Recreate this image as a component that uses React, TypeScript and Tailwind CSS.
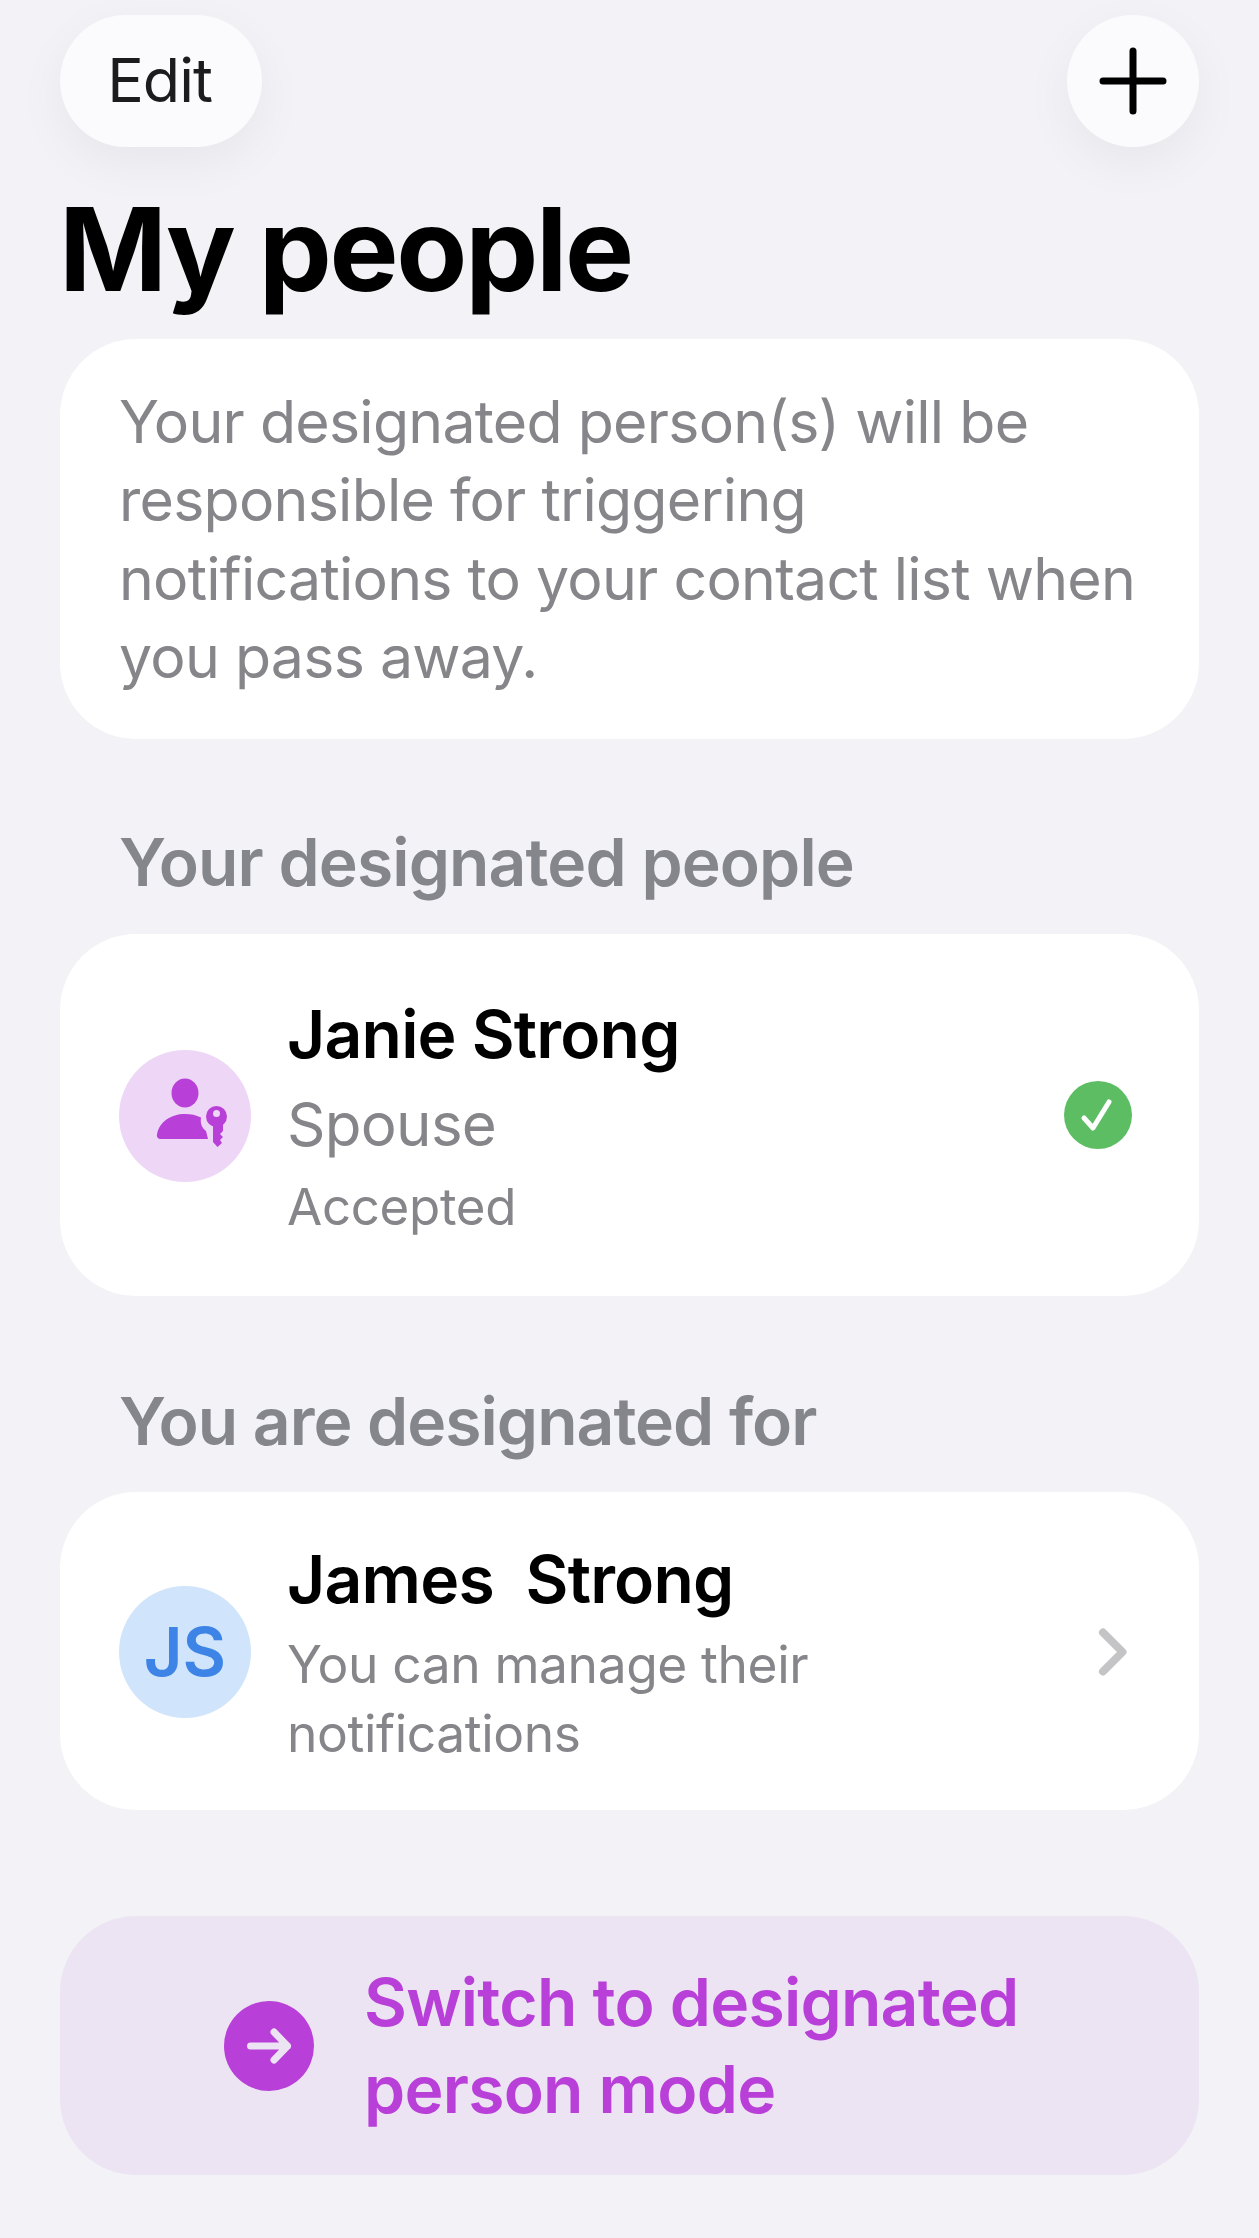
import React from "react";

const font = { fontFamily: "Inter, 'Liberation Sans', sans-serif" };

const PersonKeyIcon = () => (
  <svg width="132" height="132" viewBox="0 0 132 132" fill="#b93fd9">
    <ellipse cx="66" cy="43" rx="13.500" ry="14.500" />
    <path d="M42 89c-3 0-4.500-2-4-4.500C40 72 52 64 66 64c6 0 11 1 16 3.500-1 6 1 10.500 5 13.500l2 8z" />
    <circle cx="97.500" cy="66.500" r="10.500" />
    <path d="M94 72v20l4.500 5 4.500-4-2-3 3-3-3-3 3-3v-9z" />
    <circle cx="97.500" cy="63.500" r="3.500" fill="#eed6f6" />
  </svg>
);

export default function App() {
  return (
    <div
      className="w-[1259px] h-[2238px] bg-[#f2f2f7] px-[60px] pt-[15px] overflow-hidden"
      style={font}
    >
      <div className="flex justify-between">
        <button className="w-[202px] h-[132px] rounded-[66px] bg-[#fbfbfe] text-[#1c1c1e] text-[61px] tracking-[-1px] pr-[3px] shadow-[0_16px_50px_rgba(0,0,0,0.05)]">
          Edit
        </button>
        <button className="w-[132px] h-[132px] rounded-full bg-[#fbfbfe] flex items-center justify-center shadow-[0_16px_50px_rgba(0,0,0,0.05)]">
          <svg width="68" height="68" viewBox="0 0 68 68" stroke="#000" strokeWidth="7" strokeLinecap="round">
            <path d="M34 4v60M4 34h60" />
          </svg>
        </button>
      </div>

      <h1 className="mt-[32px] -ml-[1px] text-[116px] leading-[140px] font-bold text-black tracking-[-2.300px]">My people</h1>

      <div className="mt-[20px] bg-white rounded-[76px] h-[400px] pl-[59px] pr-[52px] pt-[44px]">
        <p className="text-[59px] leading-[78.300px] text-[#85858a] tracking-[-0.740px]">
          Your designated person(s) will be responsible for triggering notifications to your contact list when you pass away.
        </p>
      </div>

      <h2 className="mt-[87px] ml-[59px] text-[66px] leading-[72px] font-semibold text-[#85858c] tracking-[-0.900px]">
        Your designated people
      </h2>

      <div className="mt-[36px] bg-white rounded-[76px] h-[362px] pl-[59px] pr-[67px] flex items-center">
        <div className="mt-[2px] w-[132px] h-[132px] rounded-full bg-[#eed6f6] flex items-center justify-center">
          <PersonKeyIcon />
        </div>
        <div className="ml-[36px] flex-1 pt-[2px]">
          <div className="text-[66px] leading-[78px] font-semibold text-black tracking-[-0.800px]">Janie Strong</div>
          <div className="mt-[15px] text-[60px] leading-[72px] text-[#85858a] tracking-[-0.700px]">Spouse</div>
          <div className="mt-[16px] text-[51px] leading-[62px] text-[#85858a] tracking-[-0.300px]">Accepted</div>
        </div>
        <div className="w-[68px] h-[68px] rounded-full bg-[#5dbd63] flex items-center justify-center">
          <svg width="36" height="36" viewBox="0 0 36 36" fill="none" stroke="#fff" strokeWidth="5" strokeLinecap="round" strokeLinejoin="round">
            <path d="M4 21l9 10L29 5" />
          </svg>
        </div>
      </div>

      <h2 className="mt-[89px] ml-[59px] text-[66px] leading-[72px] font-semibold text-[#85858c] tracking-[-1px]">
        You are designated for
      </h2>

      <div className="mt-[35px] bg-white rounded-[76px] h-[318px] pl-[59px] pr-[68px] flex items-center">
        <div className="mt-[2px] w-[132px] h-[132px] rounded-full bg-[#d0e4fb] flex items-center justify-center text-[#3d84e6] text-[67px] font-semibold">
          JS
        </div>
        <div className="ml-[36px] flex-1 pt-[6px]">
          <div className="text-[66px] leading-[78px] font-semibold text-black tracking-[-0.800px] whitespace-pre">James  Strong</div>
          <div className="mt-[12px] text-[51.500px] leading-[69px] text-[#85858a] tracking-[-0.400px] w-[600px]">
            You can manage their notifications
          </div>
        </div>
        <svg width="32" height="48" viewBox="0 0 32 48" fill="none" stroke="#c4c4c6" strokeWidth="8" strokeLinecap="round" strokeLinejoin="round" className="mt-[1px] mr-[1px]">
          <path d="M5 4.500L24.500 24 5 43.500" />
        </svg>
      </div>

      <button className="mt-[106px] w-full h-[259px] rounded-[76px] bg-[#ede4f3] flex items-center justify-start pl-[164px]">
        <span className="w-[90px] h-[90px] rounded-full bg-[#b93fd9] flex items-center justify-center">
          <svg width="52" height="44" viewBox="0 0 52 44" fill="none" stroke="#ede4f3" strokeWidth="7" strokeLinecap="round" strokeLinejoin="round">
            <path d="M7.500 22h37M31 8l13.500 14L31 36" />
          </svg>
        </span>
        <span className="ml-[50px] w-[700px] text-left text-[66px] leading-[87px] font-semibold text-[#b93fd9] tracking-[-0.750px]">
          Switch to designated person mode
        </span>
      </button>
    </div>
  );
}
